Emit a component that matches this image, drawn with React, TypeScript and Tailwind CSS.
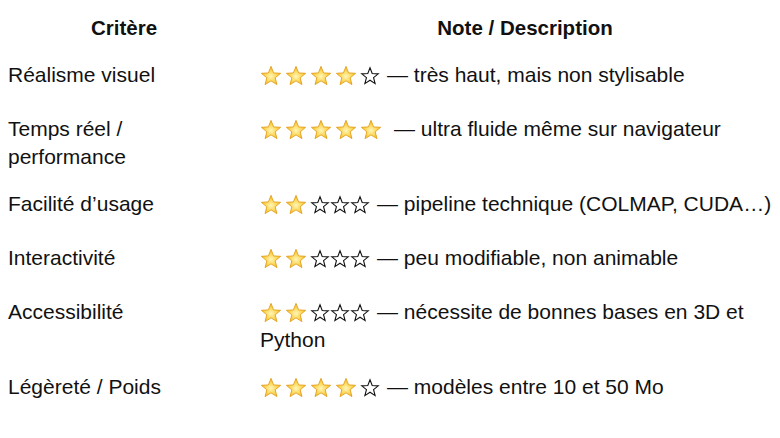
import React from 'react';

type Row = { label: React.ReactNode; filled: number; empty: number; text: string; wide?: boolean };

const rows: Row[] = [
  { label: 'Réalisme visuel', filled: 4, empty: 1, text: 'très haut, mais non stylisable' },
  { label: 'Temps réel / performance', filled: 5, empty: 0, text: 'ultra fluide même sur navigateur', wide: true },
  { label: 'Facilité d’usage', filled: 2, empty: 3, text: 'pipeline technique (COLMAP, CUDA…)' },
  { label: 'Interactivité', filled: 2, empty: 3, text: 'peu modifiable, non animable' },
  { label: 'Accessibilité', filled: 2, empty: 3, text: 'nécessite de bonnes bases en 3D et Python' },
  { label: 'Légèreté / Poids', filled: 4, empty: 1, text: 'modèles entre 10 et 50 Mo' },
];

function GoldStar() {
  return (
    <svg width="22" height="22" viewBox="0 0 24 24" className="inline-block align-[-5px] mr-[3px]">
      <defs>
        <radialGradient id="starGlow" cx="50%" cy="55%" r="60%">
          <stop offset="0%" stopColor="#FFF6B8" />
          <stop offset="55%" stopColor="#FCD34D" />
          <stop offset="100%" stopColor="#F0A81E" />
        </radialGradient>
      </defs>
      <polygon
        points="12,1.5 14.82,8.62 22.46,9.1 16.57,13.98 18.47,21.4 12,17.3 5.53,21.4 7.43,13.98 1.54,9.1 9.18,8.62"
        fill="url(#starGlow)"
        stroke="#E3A01C"
        strokeWidth="1"
        strokeLinejoin="round"
      />
    </svg>
  );
}

// outline star, like the ☆ glyph
function EmptyStar() {
  return (
    <svg width="20" height="20" viewBox="-1 -1 22 22" className="inline-block align-[-4px]">
      <polygon
        points="10,1 12.41,7.28 19.13,7.63 13.9,11.87 15.64,18.37 10,14.7 4.36,18.37 6.1,11.87 0.87,7.63 7.59,7.28"
        fill="none"
        stroke="#111"
        strokeWidth="1.2"
        strokeLinejoin="miter"
      />
    </svg>
  );
}

function Stars({ filled, empty }: { filled: number; empty: number }) {
  return (
    <>
      {Array.from({ length: filled }).map((_, i) => (
        <GoldStar key={'f' + i} />
      ))}
      {Array.from({ length: empty }).map((_, i) => (
        <EmptyStar key={'e' + i} />
      ))}
    </>
  );
}

export default function App() {
  return (
    <div className="w-full h-[438px] overflow-hidden bg-white text-[#111] font-['Liberation_Sans',Arial,sans-serif]">
      <div className="grid grid-cols-[252px_1fr] pt-[14px] pb-[19px] text-[20.5px] leading-[28px] font-bold">
        <div className="pr-[4px] text-center">Critère</div>
        <div className="pl-[18px] text-center">Note / Description</div>
      </div>
      {rows.map((r, i) => (
        <div key={i} className="grid grid-cols-[252px_1fr] pb-[19px] text-[21px] leading-[28px]">
          <div className="pl-2 pr-4 min-h-[35px]">{r.label}</div>
          <div className="pl-2 min-h-[35px]">
            <Stars filled={r.filled} empty={r.empty} />
            <span className={r.wide ? 'ml-[9px]' : 'ml-[7px]'}>— {r.text}</span>
          </div>
        </div>
      ))}
    </div>
  );
}
